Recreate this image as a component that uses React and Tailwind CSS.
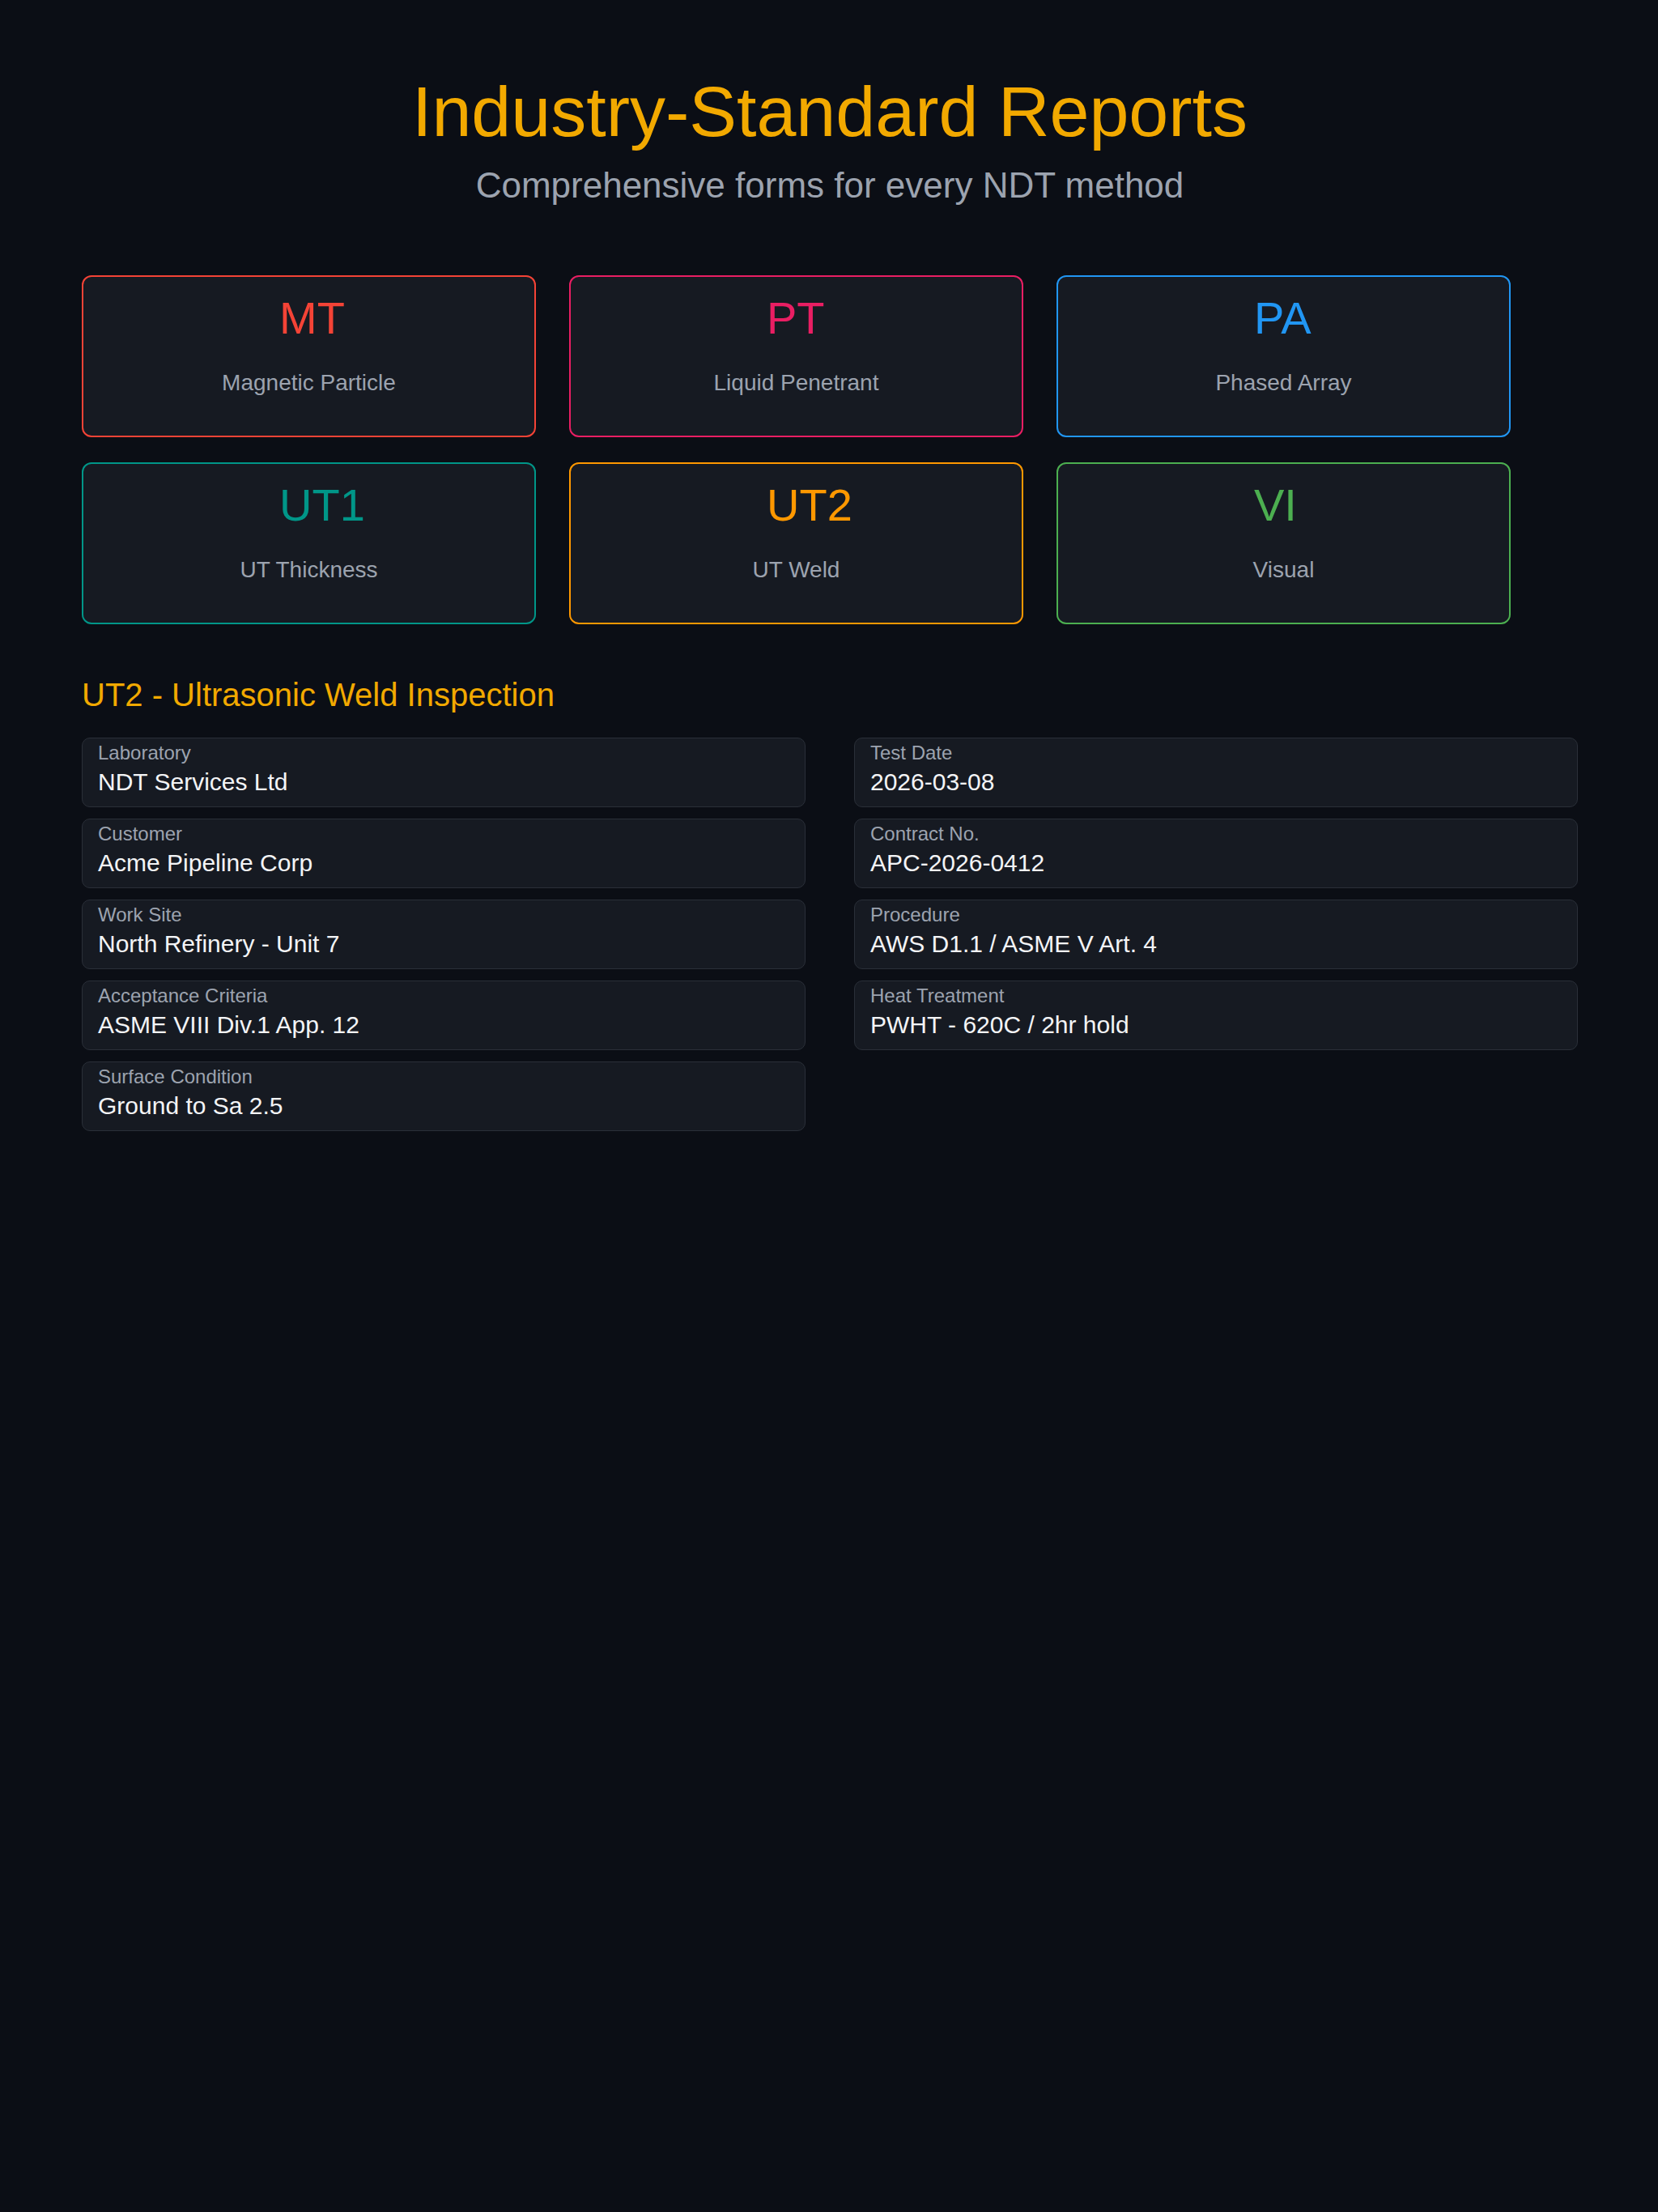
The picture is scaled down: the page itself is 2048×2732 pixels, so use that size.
const METHODS = [
  { code: 'MT', name: 'Magnetic Particle', border: 'border-[#f44336]', text: 'text-[#f44336]' },
  { code: 'PT', name: 'Liquid Penetrant', border: 'border-[#e91e63]', text: 'text-[#e91e63]' },
  { code: 'PA', name: 'Phased Array', border: 'border-[#2196f3]', text: 'text-[#2196f3]' },
  { code: 'UT1', name: 'UT Thickness', border: 'border-[#009688]', text: 'text-[#009688]' },
  { code: 'UT2', name: 'UT Weld', border: 'border-[#ff9800]', text: 'text-[#ff9800]' },
  { code: 'VI', name: 'Visual', border: 'border-[#4caf50]', text: 'text-[#4caf50]' },
];

const LEFT_FIELDS = [
  ['Laboratory', 'NDT Services Ltd'],
  ['Customer', 'Acme Pipeline Corp'],
  ['Work Site', 'North Refinery - Unit 7'],
  ['Acceptance Criteria', 'ASME VIII Div.1 App. 12'],
  ['Surface Condition', 'Ground to Sa 2.5'],
];

const RIGHT_FIELDS = [
  ['Test Date', '2026-03-08'],
  ['Contract No.', 'APC-2026-0412'],
  ['Procedure', 'AWS D1.1 / ASME V Art. 4'],
  ['Heat Treatment', 'PWHT - 620C / 2hr hold'],
];

const MethodCard = ({ m }) => (
  <div className={`h-[200px] rounded-[12px] border-2 ${m.border} bg-[#161a22] pt-[19px]`}>
    <div className={`pl-[242px] text-[56px] leading-[64px] ${m.text}`}>{m.code}</div>
    <div className="mt-[32px] text-center text-[28px] leading-[32px] text-[#9ca3af]">{m.name}</div>
  </div>
);

const Field = ({ label, value }) => (
  <div className="h-[86px] rounded-[10px] border border-[#2a2f38] bg-[#161a22] px-[19px] pt-[4px]">
    <div className="text-[24px] leading-[27px] text-[#9ca3af]">{label}</div>
    <div className="mt-[6px] text-[30px] leading-[34px] text-[#f3f4f6]">{value}</div>
  </div>
);

export default function App() {
  return (
    <div
      className="min-h-[2732px] bg-[#0b0e15] pl-[101px] pr-[99px] pt-[87px]"
      style={{ fontFamily: '"Liberation Sans", Arial, sans-serif' }}
    >
      {/* Header */}
      <h1 className="text-center text-[88px] leading-[101px] text-[#f2a900]">Industry-Standard Reports</h1>
      <p className="mt-[15px] text-center text-[44px] leading-[51px] text-[#9ca3af]">
        Comprehensive forms for every NDT method
      </p>

      {/* Method cards */}
      <div className="mt-[86px] grid grid-cols-[repeat(3,561px)] gap-x-[41px] gap-y-[31px]">
        {METHODS.map((m) => (
          <MethodCard key={m.code} m={m} />
        ))}
      </div>

      {/* Form */}
      <h2 className="mt-[64px] text-[40px] leading-[46px] text-[#f2a900]">UT2 - Ultrasonic Weld Inspection</h2>
      <div className="mt-[30px] flex gap-[60px]">
        <div className="flex flex-1 flex-col gap-[14px]">
          {LEFT_FIELDS.map(([l, v]) => (
            <Field key={l} label={l} value={v} />
          ))}
        </div>
        <div className="flex flex-1 flex-col gap-[14px]">
          {RIGHT_FIELDS.map(([l, v]) => (
            <Field key={l} label={l} value={v} />
          ))}
        </div>
      </div>
    </div>
  );
}
